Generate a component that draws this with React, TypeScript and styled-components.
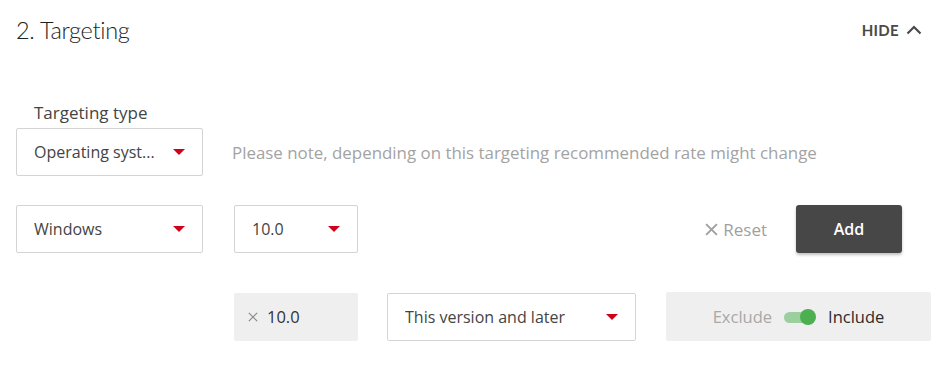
import React, { useState } from 'react'
import styled, { createGlobalStyle } from 'styled-components'

const GlobalStyle = createGlobalStyle`
  html, body {
    margin: 0;
    padding: 0;
    background: #fff;
  }
  body {
    font-family: "Open Sans", Lato, sans-serif;
    color: #444;
  }
  * { box-sizing: border-box; }
`

const Section = styled.section`
  width: 947px;
  padding: 0 0 0 16px;
`

const Header = styled.header`
  height: 60px;
  display: flex;
  align-items: center;
  justify-content: space-between;
  padding-right: 25px;
`

const Title = styled.h2`
  margin: 0;
  font-family: Lato, sans-serif;
  font-size: 23.5px;
  font-weight: 300;
  letter-spacing: -0.3px;
  color: #1e1e1e;
  line-height: 32px;
`

const HideButton = styled.button`
  border: 0;
  background: none;
  padding: 0;
  display: flex;
  align-items: center;
  gap: 7px;
  font-family: Lato, sans-serif;
  font-size: 15px;
  font-weight: 700;
  letter-spacing: 0.3px;
  color: #4a4a4a;
  cursor: pointer;
`

const Label = styled.div`
  margin: 43px 0 5px 18px;
  font-size: 17px;
  line-height: 20px;
  color: #444;
`

const Row = styled.div<{ $top?: number; $indent?: number }>`
  display: flex;
  align-items: center;
  margin-top: ${(p) => p.$top ?? 0}px;
  padding-left: ${(p) => p.$indent ?? 0}px;
`

const Gap = styled.div<{ $w: number }>`
  width: ${(p) => p.$w}px;
  flex: none;
`

const SelectBox = styled.div<{ $w: number }>`
  width: ${(p) => p.$w}px;
  height: 48px;
  flex: none;
  border: 1px solid #d4d4d4;
  border-radius: 2px;
  display: flex;
  align-items: center;
  justify-content: space-between;
  padding: 0 17px 0 17px;
  font-size: 16px;
  color: #444;
  background: #fff;
`

const SelectText = styled.span`
  white-space: nowrap;
  overflow: hidden;
  text-overflow: ellipsis;
`

const Caret = styled.span`
  flex: none;
  width: 0;
  height: 0;
  margin-left: 10px;
  border-left: 6px solid transparent;
  border-right: 6px solid transparent;
  border-top: 6px solid #d0021b;
`

const Note = styled.div`
  font-size: 16.9px;
  color: #a3a3a3;
  white-space: nowrap;
`

const Spacer = styled.div`
  flex: 1;
`

const ResetButton = styled.button`
  border: 0;
  background: none;
  padding: 0;
  display: flex;
  align-items: center;
  gap: 5px;
  font-family: inherit;
  font-size: 17px;
  color: #a0a0a0;
  cursor: pointer;
`

const AddButton = styled.button`
  width: 106px;
  height: 48px;
  margin: 0 45px 0 29px;
  border: 0;
  border-radius: 3px;
  background: #474747;
  box-shadow: 0 2px 3px rgba(0, 0, 0, 0.25);
  color: #fff;
  font-family: inherit;
  font-size: 16px;
  font-weight: 600;
  cursor: pointer;
`

const Chip = styled.div`
  width: 124px;
  height: 48px;
  flex: none;
  background: #efefef;
  border-radius: 2px;
  display: flex;
  align-items: center;
  gap: 9px;
  padding-left: 14px;
  font-size: 16.5px;
  color: #333;
`

const ChipX = styled.span`
  color: #888;
  display: flex;
`

const ToggleBox = styled.div`
  width: 265px;
  height: 49px;
  flex: none;
  background: #efefef;
  border-radius: 2px;
  display: flex;
  align-items: center;
  justify-content: center;
  gap: 12px;
  font-size: 16.5px;
`

const ToggleLabel = styled.span<{ $active: boolean }>`
  color: ${(p) => (p.$active ? '#2b2b2b' : '#a8a8a8')};
`

const Switch = styled.button<{ $on: boolean }>`
  position: relative;
  width: 32px;
  height: 16px;
  border: 0;
  padding: 0;
  background: none;
  cursor: pointer;

  &::before {
    content: '';
    position: absolute;
    left: 0;
    top: 3px;
    width: 27px;
    height: 11px;
    border-radius: 6px;
    background: ${(p) => (p.$on ? '#9ccf9e' : '#c4c4c4')};
  }

  &::after {
    content: '';
    position: absolute;
    top: 0;
    left: ${(p) => (p.$on ? '16px' : '0')};
    width: 16px;
    height: 16px;
    border-radius: 50%;
    background: ${(p) => (p.$on ? '#4caf50' : '#f5f5f5')};
  }
`

const Cross = ({ size = 12, w = 1.6 }: { size?: number; w?: number }) => (
  <svg width={size} height={size} viewBox="0 0 12 12">
    <path d="M1 1L11 11M11 1L1 11" stroke="currentColor" strokeWidth={w} fill="none" />
  </svg>
)

const App = () => {
  const [include, setInclude] = useState(true)

  return (
    <>
      <GlobalStyle />
      <Section>
        <Header>
          <Title>2. Targeting</Title>
          <HideButton>
            HIDE
            <svg width="16" height="10" viewBox="0 0 16 10">
              <path d="M1.5 8.5L8 2L14.5 8.5" stroke="#4a4a4a" strokeWidth="2.2" fill="none" />
            </svg>
          </HideButton>
        </Header>

        <Label>Targeting type</Label>
        <Row>
          <SelectBox $w={187}>
            <SelectText>Operating syst...</SelectText>
            <Caret />
          </SelectBox>
          <Gap $w={29} />
          <Note>Please note, depending on this targeting recommended rate might change</Note>
        </Row>

        <Row $top={29}>
          <SelectBox $w={187}>
            <SelectText>Windows</SelectText>
            <Caret />
          </SelectBox>
          <Gap $w={31} />
          <SelectBox $w={124}>
            <SelectText>10.0</SelectText>
            <Caret />
          </SelectBox>
          <Spacer />
          <ResetButton>
            <Cross size={13} w={1.8} />
            Reset
          </ResetButton>
          <AddButton>Add</AddButton>
        </Row>

        <Row $top={39} $indent={218}>
          <Chip>
            <ChipX>
              <Cross size={10} w={1.4} />
            </ChipX>
            10.0
          </Chip>
          <Gap $w={29} />
          <SelectBox $w={249}>
            <SelectText>This version and later</SelectText>
            <Caret />
          </SelectBox>
          <Gap $w={30} />
          <ToggleBox>
            <ToggleLabel $active={!include}>Exclude</ToggleLabel>
            <Switch $on={include} onClick={() => setInclude(!include)} />
            <ToggleLabel $active={include}>Include</ToggleLabel>
          </ToggleBox>
        </Row>
      </Section>
    </>
  )
}

export default App
